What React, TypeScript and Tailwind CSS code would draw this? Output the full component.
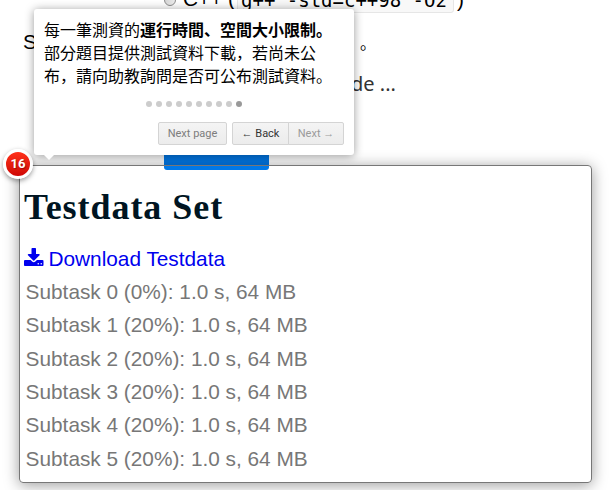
import React from "react";

const subtasks = [0, 20, 20, 20, 20, 20];

function SubmitForm() {
  return (
    <div className="h-[170px] text-[20.8px] text-black">
      <div className="flex h-[13px] items-end pl-[164px]">
        <span className="mb-[7px] h-3 w-3 shrink-0 rounded-full border border-[#8c8c8c] bg-gradient-to-br from-[#c8c8c8] to-[#f5f5f5]" />
        <span className="ml-[7px] h-[26px] leading-[24px] whitespace-pre">C++ (</span>
        <code className="ml-[2px] h-[26px] w-[217px] rounded-[3px] border border-[#e6e6e6] bg-[#f8f8f8] pl-[3px] font-['DejaVu_Sans_Mono',monospace] text-[19px] leading-[24px] whitespace-pre">
          g++ -std=c++98 -O2
        </code>
        <span className="ml-[3px] h-[26px] leading-[26px]">)</span>
      </div>
      <div className="flex h-[58px] items-center pl-[23px]">
        <span className="w-[333px]">S</span>
        <span className="font-['Noto_Sans_CJK_JP',sans-serif] text-base pl-1">。</span>
      </div>
      <div className="flex h-[26px] items-center pl-[351px] font-['Noto_Sans',sans-serif] text-[20px] text-[#333]">
        de ...
      </div>
      <div className="ml-[164px] mt-[33px] h-10 w-[105px] rounded-[3px] bg-[#0078e7]" />
    </div>
  );
}

function DownloadIcon() {
  return (
    <svg viewBox="0 0 1664 1664" className="-mt-[2px] h-[19.5px] w-[19.5px]" fill="currentColor">
      <path d="M1280 1344q0-26-19-45t-45-19-45 19-19 45 19 45 45 19 45-19 19-45zm256 0q0-26-19-45t-45-19-45 19-19 45 19 45 45 19 45-19 19-45zm128-224v320q0 40-28 68t-68 28H96q-40 0-68-28t-28-68v-320q0-40 28-68t68-28h465l135 136q58 56 136 56t136-56l136-136h464q40 0 68 28t28 68zm-325-569q17 41-14 70l-448 448q-18 19-45 19t-45-19L339 621q-31-29-14-70 17-39 59-39h256V64q0-26 19-45t45-19h256q26 0 45 19t19 45v448h256q42 0 59 39z" />
    </svg>
  );
}

function TestdataPanel() {
  return (
    <section className="relative -mt-[5px] ml-[19px] h-[318px] w-[573px] rounded-[4px] border border-[#777] pl-1 shadow-[0_2px_15px_rgba(0,0,0,0.4)]">
      <h1 className="mt-[21px] h-10 font-['Liberation_Serif',serif] text-[36px] leading-10 font-bold tracking-[0.95px] whitespace-nowrap text-[#001522]">
        Testdata Set
      </h1>
      <a className="mt-[16px] flex h-8 items-center gap-[5px] text-[20.8px] text-[#0000ee]" href="#download">
        <DownloadIcon />
        Download Testdata
      </a>
      <ul className="ml-[1.6px] text-[20.8px] leading-[33.35px] whitespace-nowrap text-[#777]">
        {subtasks.map((percent, index) => (
          <li key={index}>{`Subtask ${index} (${percent}%): 1.0 s, 64 MB`}</li>
        ))}
      </ul>
      <span className="absolute -top-[17px] -left-[17px] flex h-[30px] w-[30px] items-center justify-center rounded-full border-3 border-white bg-gradient-to-b from-[#ff3019] to-[#cf0404] font-['Roboto',sans-serif] text-[13px] font-bold text-white shadow-[0_2px_5px_rgba(0,0,0,0.4)] [text-shadow:1px_1px_1px_rgba(0,0,0,0.3)]">
        16
      </span>
    </section>
  );
}

function TourTooltip() {
  const button =
    "flex h-[23px] items-center justify-center border border-[#d4d4d4] bg-gradient-to-b from-[#f4f4f4] to-[#ececec]";
  return (
    <div className="absolute top-[9px] left-[34px] flex h-[146px] w-[320px] flex-col rounded-[3px] bg-white px-[10px] pb-[10px] shadow-[0_1px_10px_rgba(0,0,0,0.4)]">
      <p className="mt-[9px] h-[69px] font-['Noto_Sans_CJK_JP',sans-serif] text-base leading-[22.8px] whitespace-nowrap text-black">
        每一筆測資的<b>運行時間、空間大小限制。</b>
        <br />
        部分題目提供測試資料下載，若尚未公
        <br />
        布，請向助教詢問是否可公布測試資料。
      </p>
      <div className="mt-[14px] flex justify-center gap-1">
        {Array.from({ length: 10 }, (_, index) => (
          <i key={index} className={index === 9 ? "h-1.5 w-1.5 rounded-full bg-[#999]" : "h-1.5 w-1.5 rounded-full bg-[#ccc]"} />
        ))}
      </div>
      <div className="mt-auto flex justify-end font-['Roboto',sans-serif] text-[11px] text-[#333]">
        <button className={`${button} mr-[5px] w-[69px] rounded-[2px] pt-px text-[#7d7d7d]`}>Next page</button>
        <button className={`${button} w-[57px] rounded-l-[2px] pt-px`}>← Back</button>
        <button className={`${button} -ml-px w-[56px] rounded-r-[2px] pt-px text-[#9a9a9a]`}>Next →</button>
      </div>
      <span className="absolute top-full left-[10px] border-x-5 border-t-5 border-x-transparent border-t-white" />
    </div>
  );
}

export default function App() {
  return (
    <main className="relative h-[490px] w-[609px] overflow-hidden bg-white font-['Liberation_Sans',Arial,sans-serif]">
      <SubmitForm />
      <TestdataPanel />
      <TourTooltip />
    </main>
  );
}
